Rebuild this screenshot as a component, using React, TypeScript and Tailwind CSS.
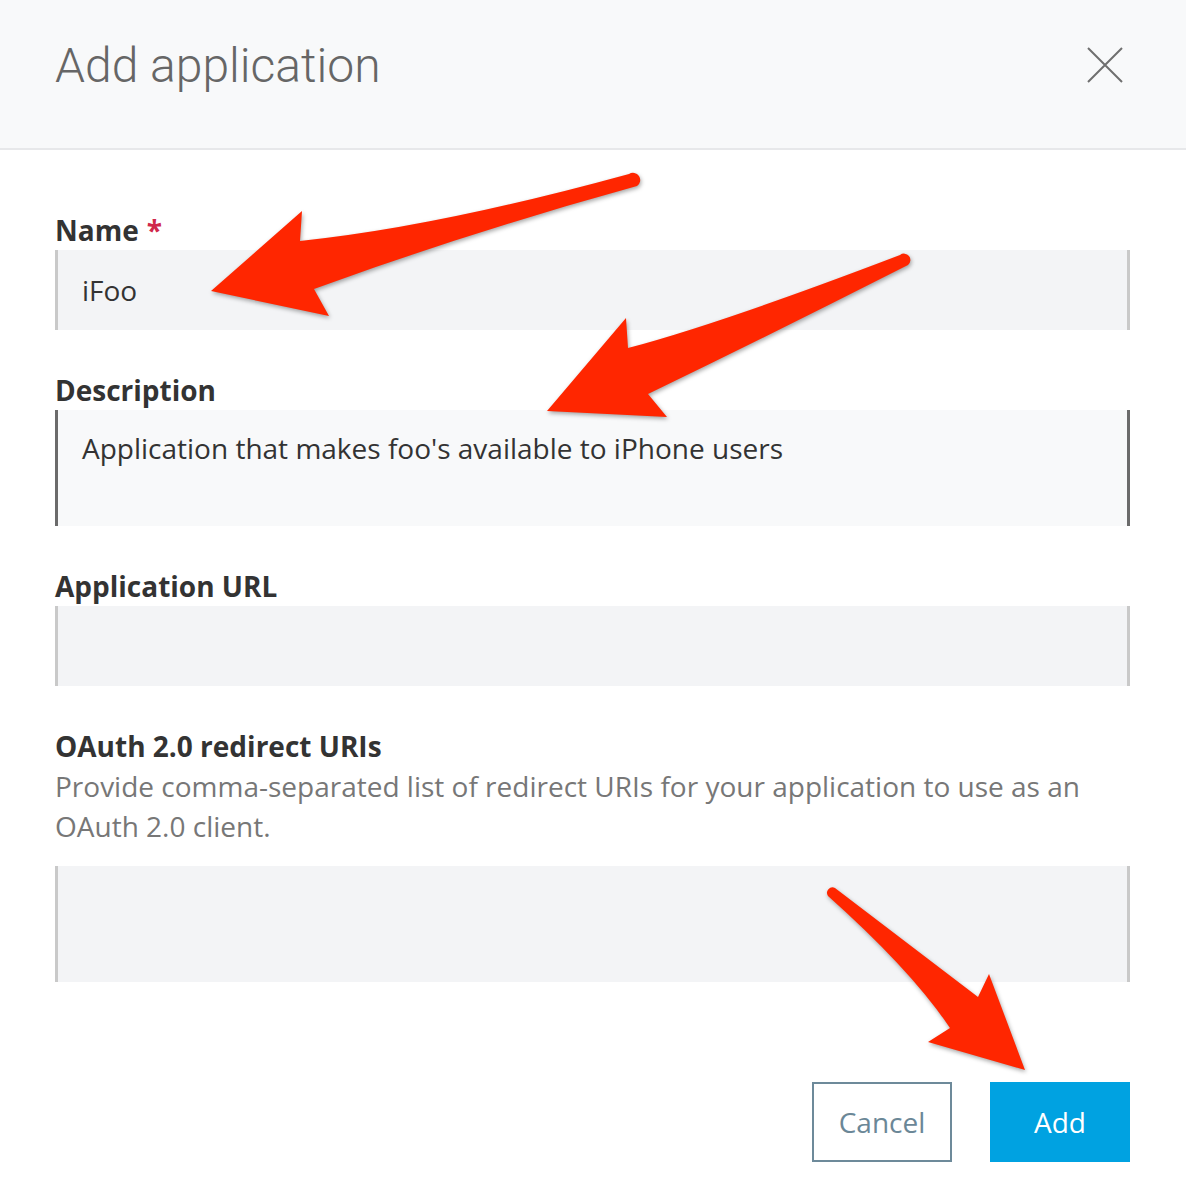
const Field = ({ label, required, children, className = '' }: { label: string; required?: boolean; children: React.ReactNode; className?: string }) => (
  <div className={className}>
    <label className="block text-[28px] font-bold leading-[40px] text-[#333]">
      {label}
      {required && <span className="ml-[8px] text-[#d0294b]">*</span>}
    </label>
    {children}
  </div>
)

const Arrows = () => (
  <svg
    className="pointer-events-none absolute inset-0 drop-shadow-[1px_2px_2px_rgba(0,0,0,0.35)]"
    width="1186"
    height="1200"
    viewBox="0 0 1186 1200"
  >
    {/* name */}
    <path
      fill="#ff2600"
      d="M300 241 Q436 227 629 174 A6.5 6.5 0 0 1 637 186 Q470 232 314 289 L329 316 L211 291 L302 211 Z"
    />
    {/* description */}
    <path
      fill="#ff2600"
      d="M628 348 Q722 323 900 255 A5.5 5.5 0 0 1 908 265 Q780 330 648 394 L667 417 L547 411 L626 318 Z"
    />
    {/* add button */}
    <path
      fill="#ff2600"
      d="M835 888 L978 997 L989 974 L1025 1070 L928 1042 L950 1028 Q911 970 828 896 A5.5 5.5 0 0 1 835 888 Z"
    />
  </svg>
)

const App = () => {
  return (
    <div className="relative min-h-[1200px] w-[1186px] bg-white font-['Open_Sans',sans-serif]">
      {/* header */}
      <header className="flex h-[150px] items-start justify-between border-b-2 border-[#e7e8ea] bg-[#f8f9fa] pl-[55px] pr-[63px] pt-[42px]">
        <h1 className="font-['Roboto',sans-serif] text-[48px] font-light leading-[48px] text-[#666]">Add application</h1>
        <button className="mt-[5px]">
          <svg width="36" height="36" viewBox="0 0 36 36" fill="none" stroke="#6f6f6f" strokeWidth="2">
            <path d="M1 1 L35 35 M35 1 L1 35" />
          </svg>
        </button>
      </header>

      {/* form */}
      <form className="pl-[55px] pr-[56px] pt-[60px] pb-[38px]">
        <Field label="Name" required>
          <input
            readOnly
            defaultValue="iFoo"
            className="block h-[80px] w-full border-x-[3px] border-[#c9c9c9] bg-[#f3f4f6] px-[24px] text-[28px] text-[#333] outline-none"
          />
        </Field>

        <Field label="Description" className="mt-[40px]">
          <textarea
            readOnly
            defaultValue="Application that makes foo's available to iPhone users"
            className="block h-[116px] w-full resize-none border-x-[3px] border-[#6b6b6b] bg-[#f8f9fa] px-[24px] pt-[18px] text-[28px] leading-[40px] text-[#333] outline-none"
          />
        </Field>

        <Field label="Application URL" className="mt-[40px]">
          <input
            readOnly
            className="block h-[80px] w-full border-x-[3px] border-[#c9c9c9] bg-[#f3f4f6] px-[24px] text-[28px] text-[#333] outline-none"
          />
        </Field>

        <Field label="OAuth 2.0 redirect URIs" className="mt-[40px]">
          <p className="text-[28px] leading-[40px] text-[#777]">
            Provide comma-separated list of redirect URIs for your application to use as an OAuth 2.0 client.
          </p>
          <textarea
            readOnly
            className="mt-[20px] block h-[116px] w-full resize-none border-x-[3px] border-[#c9c9c9] bg-[#f3f4f6] px-[24px] pt-[18px] text-[28px] leading-[40px] text-[#333] outline-none"
          />
        </Field>

        <div className="mt-[100px] flex justify-end gap-[38px]">
          <button
            type="button"
            className="h-[80px] w-[140px] border-2 border-[#6d8a9a] bg-white text-[28px] text-[#6b8797]"
          >
            Cancel
          </button>
          <button type="button" className="h-[80px] w-[140px] bg-[#00a2e1] text-[28px] text-white">
            Add
          </button>
        </div>
      </form>

      <Arrows />
    </div>
  )
}

export default App
